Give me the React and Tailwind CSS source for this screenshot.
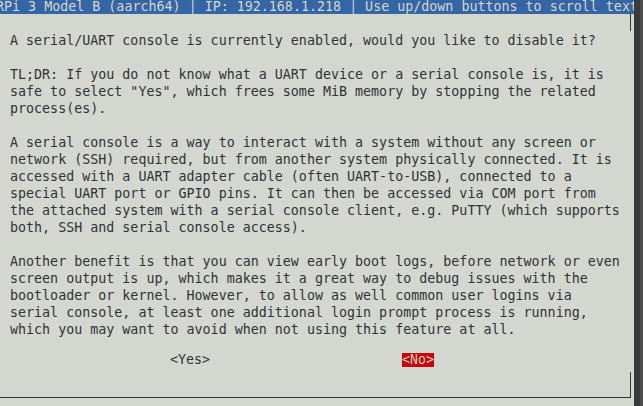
import React from "react";

const lines = [
  "A serial/UART console is currently enabled, would you like to disable it?",
  "",
  "TL;DR: If you do not know what a UART device or a serial console is, it is",
  'safe to select "Yes", which frees some MiB memory by stopping the related',
  "process(es).",
  "",
  "A serial console is a way to interact with a system without any screen or",
  "network (SSH) required, but from another system physically connected. It is",
  "accessed with a UART adapter cable (often UART-to-USB), connected to a",
  "special UART port or GPIO pins. It can then be accessed via COM port from",
  "the attached system with a serial console client, e.g. PuTTY (which supports",
  "both, SSH and serial console access).",
  "",
  "Another benefit is that you can view early boot logs, before network or even",
  "screen output is up, which makes it a great way to debug issues with the",
  "bootloader or kernel. However, to allow as well common user logins via",
  "serial console, at least one additional login prompt process is running,",
  "which you may want to avoid when not using this feature at all.",
];

export default function App() {
  return (
    <div
      className="flex w-[643px] h-[406px] overflow-hidden bg-[#d3d7cf] text-[#2e3436]"
      style={{ fontFamily: '"DejaVu Sans Mono", monospace' }}
    >
      <div className="flex flex-col w-[634px] text-[13.33px]">
        <div className="h-[14px] bg-[#3465a4] text-[#d3d7cf] overflow-hidden whitespace-pre leading-[14px]">
          <div className="ml-[-4px]">
            {"RPi 3 Model B (aarch64) │ IP: 192.168.1.218 │ Use up/down buttons to scroll text"}
          </div>
        </div>
        <div className="h-[18px] flex justify-end pr-[3px]">
          <div className="w-px h-[17px] bg-[#2e3436]" />
        </div>
        <div className="pl-[10px] flex flex-col">
          {lines.map((l, i) => (
            <div key={i} className="h-[17px] leading-[17px] whitespace-pre">
              {l}
            </div>
          ))}
        </div>
        <div className="mt-[15px] h-[14px] leading-[14px] flex whitespace-pre">
          <div className="w-[170px]" />
          <div className="w-[232px]">{"<Yes>"}</div>
          <div className="bg-[#cc0000] text-[#d3d7cf]">{"<No>"}</div>
        </div>
        <div className="mt-[5px] h-[26px] w-[631px] border-r border-b border-[#2e3436]" />
      </div>
      <div className="w-[6px] bg-[#3b3b3b]" />
      <div className="w-[3px] bg-[#4e4e4e]" />
    </div>
  );
}
